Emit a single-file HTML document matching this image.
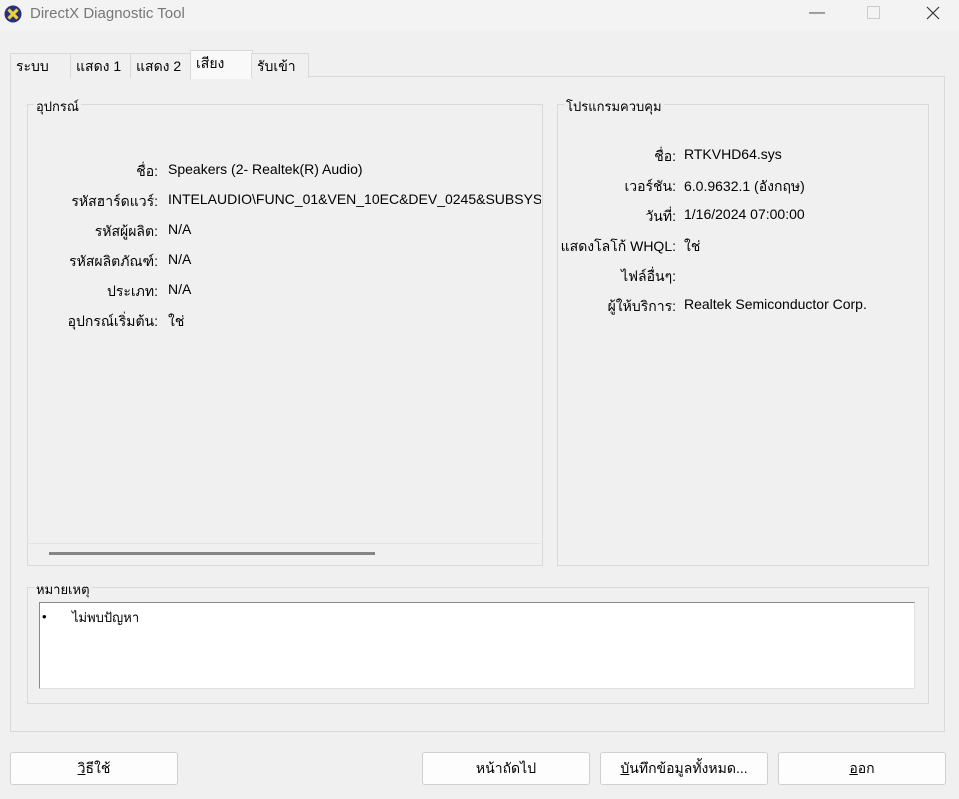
<!DOCTYPE html>
<html><head><meta charset="utf-8"><style>
body{margin:0;width:959px;height:799px;background:#f0f0f0;font-family:"Liberation Sans","Noto Sans CJK SC",sans-serif;font-size:14px;color:#000;position:relative;overflow:hidden}
.a{position:absolute;white-space:nowrap}
.r{text-align:right}
.grp{position:absolute;border:1px solid #d9d9d9;}
.lg{position:absolute;background:#f0f0f0;padding:0 2px;font-size:13px}
.btn{position:absolute;top:752px;height:31px;background:#fdfdfd;border:1px solid #d0d0d0;border-radius:3px;text-align:center;line-height:31px;font-size:14px}
.tab{position:absolute;top:53px;height:24px;border:1px solid #d9d9d9;border-bottom:none;line-height:24px;padding-left:5px;font-size:14px;background:#f0f0f0}
</style></head><body>
<div class="a" style="left:0;top:0;width:959px;height:30px;background:#f3f3f3"></div>
<svg class="a" style="left:4px;top:5px" width="18" height="18" viewBox="0 0 18 18"><circle cx="9" cy="9" r="8.5" fill="#2a2f7a"/><path d="M4.5 4.5L13.5 13.5M13.5 4.5L4.5 13.5" stroke="#e8d23a" stroke-width="3.2"/></svg>
<div class="a" style="left:30px;top:5px;font-size:15px;color:#777">DirectX Diagnostic Tool</div>
<div class="a" style="left:809px;top:4px;color:#555;font-size:16px">—</div>
<div class="a" style="left:867px;top:6px;width:11px;height:11px;border:1px solid #ccc"></div>
<svg class="a" style="left:926px;top:6px" width="14" height="14"><path d="M1 1L13 13M13 1L1 13" stroke="#333" stroke-width="1.2"/></svg>

<div class="a" style="left:10px;top:76px;width:933px;height:654px;border:1px solid #d9d9d9;background:#f0f0f0"></div>
<div class="tab" style="left:10px;width:55px">ระบบ</div>
<div class="tab" style="left:70px;width:55px">แสดง 1</div>
<div class="tab" style="left:130px;width:55px">แสดง 2</div>
<div class="tab" style="left:190px;top:50px;height:28px;width:56px;background:#f9f9f9">เสียง</div>
<div class="tab" style="left:251px;width:51px">รับเข้า</div>

<div class="grp" style="left:27px;top:104px;width:514px;height:460px"></div>
<div class="lg" style="left:34px;top:96px">อุปกรณ์</div>
<div class="a" style="left:28px;top:543px;width:513px;height:1px;background:#e4e4e4"></div>
<div class="a" style="left:49px;top:552px;width:326px;height:3px;background:#858585"></div>
<div class="a r" style="left:30px;width:128px;top:161px">ชื่อ:</div><div class="a" style="left:168px;top:161px">Speakers (2- Realtek(R) Audio)</div>
<div class="a r" style="left:30px;width:128px;top:191px">รหัสฮาร์ดแวร์:</div><div class="a" style="left:168px;top:191px;width:373px;overflow:hidden">INTELAUDIO\FUNC_01&amp;VEN_10EC&amp;DEV_0245&amp;SUBSYS_</div>
<div class="a r" style="left:30px;width:128px;top:221px">รหัสผู้ผลิต:</div><div class="a" style="left:168px;top:221px">N/A</div>
<div class="a r" style="left:30px;width:128px;top:251px">รหัสผลิตภัณฑ์:</div><div class="a" style="left:168px;top:251px">N/A</div>
<div class="a r" style="left:30px;width:128px;top:281px">ประเภท:</div><div class="a" style="left:168px;top:281px">N/A</div>
<div class="a r" style="left:30px;width:128px;top:311px">อุปกรณ์เริ่มต้น:</div><div class="a" style="left:168px;top:311px">ใช่</div>

<div class="grp" style="left:557px;top:104px;width:370px;height:460px"></div>
<div class="lg" style="left:564px;top:96px">โปรแกรมควบคุม</div>
<div class="a r" style="left:560px;width:116px;top:146px">ชื่อ:</div><div class="a" style="left:684px;top:146px">RTKVHD64.sys</div>
<div class="a r" style="left:560px;width:116px;top:176px">เวอร์ชัน:</div><div class="a" style="left:684px;top:176px">6.0.9632.1 (อังกฤษ)</div>
<div class="a r" style="left:560px;width:116px;top:206px">วันที่:</div><div class="a" style="left:684px;top:206px">1/16/2024 07:00:00</div>
<div class="a r" style="left:560px;width:116px;top:236px">แสดงโลโก้ WHQL:</div><div class="a" style="left:684px;top:236px">ใช่</div>
<div class="a r" style="left:560px;width:116px;top:266px">ไฟล์อื่นๆ:</div>
<div class="a r" style="left:560px;width:116px;top:296px">ผู้ให้บริการ:</div><div class="a" style="left:684px;top:296px">Realtek Semiconductor Corp.</div>

<div class="grp" style="left:27px;top:587px;width:900px;height:115px"></div>
<div class="lg" style="left:34px;top:579px">หมายเหตุ</div>
<div class="a" style="left:39px;top:602px;width:874px;height:85px;background:#fff;border:1px solid #888;border-right-color:#e0e0e0;border-bottom-color:#e0e0e0"></div>
<div class="a" style="left:42px;top:609px;font-size:13px">•</div>
<div class="a" style="left:72px;top:607px;font-size:13px">ไม่พบปัญหา</div>

<div class="btn" style="left:10px;width:166px"><u>ว</u>ิธีใช้</div>
<div class="btn" style="left:422px;width:166px">หน้าถัดไป</div>
<div class="btn" style="left:600px;width:166px"><u>บ</u>ันทึกข้อมูลทั้งหมด...</div>
<div class="btn" style="left:778px;width:166px"><u>อ</u>อก</div>
</body></html>
